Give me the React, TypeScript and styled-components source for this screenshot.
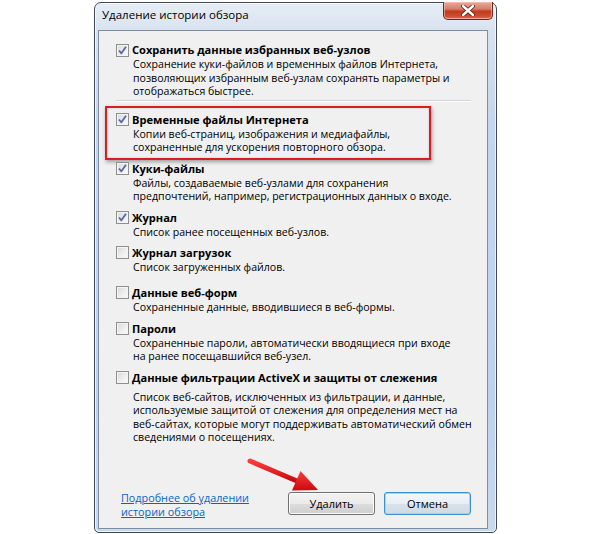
import React from 'react';
import styled, { createGlobalStyle } from 'styled-components';

const GlobalStyle = createGlobalStyle`
  html, body {
    margin: 0;
    padding: 0;
    background: #ffffff;
    overflow: hidden;
  }
  body {
    font-family: 'Open Sans', 'Noto Sans', 'DejaVu Sans', sans-serif;
    color: #000;
  }
`;

interface Option {
  title: string;
  lines: string[];
  checked: boolean;
  gap?: number;
  descGap?: number;
  highlighted?: boolean;
  separated?: boolean;
}

const options: Option[] = [
  {
    title: 'Сохранить данные избранных веб-узлов',
    lines: [
      'Сохранение куки-файлов и временных файлов Интернета,',
      'позволяющих избранным веб-узлам сохранять параметры и',
      'отображаться быстрее.',
    ],
    checked: true,
    gap: 0,
    separated: true,
  },
  {
    title: 'Временные файлы Интернета',
    lines: ['Копии веб-страниц, изображения и медиафайлы,', 'сохраненные для ускорения повторного обзора.'],
    checked: true,
    gap: 11,
    highlighted: true,
  },
  {
    title: 'Куки-файлы',
    lines: ['Файлы, создаваемые веб-узлами для сохранения', 'предпочтений, например, регистрационных данных о входе.'],
    checked: true,
  },
  { title: 'Журнал', lines: ['Список ранее посещенных веб-узлов.'], checked: true },
  { title: 'Журнал загрузок', lines: ['Список загруженных файлов.'], checked: false, gap: 6.5 },
  { title: 'Данные веб-форм', lines: ['Сохраненные данные, вводившиеся в веб-формы.'], checked: false, gap: 11.5 },
  {
    title: 'Пароли',
    lines: ['Сохраненные пароли, автоматически вводящиеся при входе', 'на ранее посещавшийся веб-узел.'],
    checked: false,
    gap: 7.5,
  },
  {
    title: 'Данные фильтрации ActiveX и защиты от слежения',
    lines: [
      'Список веб-сайтов, исключенных из фильтрации, и данные,',
      'используемые защитой от слежения для определения мест на',
      'веб-сайтах, которые могут поддерживать автоматический обмен',
      'сведениями о посещениях.',
    ],
    checked: false,
    descGap: 6,
  },
];

const CheckBox = ({ checked }: { checked: boolean }) => (
  <Box>
    {checked && (
      <svg width='11' height='11' viewBox='0 0 11 11'>
        <path d='M2 5.5 L4.4 8.3 L9 1.8' fill='none' stroke='#5467a8' strokeWidth='1.8' strokeLinejoin='round' />
      </svg>
    )}
  </Box>
);

const CloseIcon = () => (
  <svg width='14' height='11' viewBox='0 0 14 11'>
    <path d='M2 1 L12 10 M12 1 L2 10' stroke='#5a1a10' strokeWidth='4' strokeLinecap='round' />
    <path d='M2 1 L12 10 M12 1 L2 10' stroke='#ffffff' strokeWidth='2.4' strokeLinecap='round' />
  </svg>
);

const Arrow = () => (
  <ArrowLayer width='90' height='46' viewBox='0 0 90 46'>
    <defs>
      <linearGradient id='arrowRed' x1='0' y1='0' x2='0' y2='1'>
        <stop offset='0' stopColor='#ff3b3b' />
        <stop offset='1' stopColor='#c80a10' />
      </linearGradient>
    </defs>
    <path d='M10 9 L57 29' stroke='url(#arrowRed)' strokeWidth='5' strokeLinecap='round' />
    <path d='M78 38 L60.5 19 L52 38.5 Z' fill='url(#arrowRed)' />
  </ArrowLayer>
);

const App = () => {
  return (
    <>
      <GlobalStyle />
      <Page>
        <Window>
          <TitleBar>
            <Caption>Удаление истории обзора</Caption>
            <CloseButton>
              <CloseIcon />
            </CloseButton>
          </TitleBar>
          <Frame>
            <Panel>
              <List>
                {options.map((o) => (
                  <React.Fragment key={o.title}>
                    <Item $gap={o.gap ?? 7} $highlighted={!!o.highlighted}>
                      <TitleRow>
                        <CheckBox checked={o.checked} />
                        <ItemTitle>{o.title}</ItemTitle>
                      </TitleRow>
                      <Description $gap={o.descGap ?? 1}>
                        {o.lines.map((l) => (
                          <div key={l}>{l}</div>
                        ))}
                      </Description>
                    </Item>
                    {o.separated && <Separator />}
                  </React.Fragment>
                ))}
              </List>
              <Footer>
                <MoreLink href='#'>
                  Подробнее об удалении
                  <br />
                  истории обзора
                </MoreLink>
                <Buttons>
                  <Button>Удалить</Button>
                  <Button $default>Отмена</Button>
                </Buttons>
              </Footer>
            </Panel>
          </Frame>
          <Arrow />
        </Window>
      </Page>
    </>
  );
};

const Page = styled.div`
  width: 591px;
  height: 534px;
  padding: 2px 0 0 94px;
  box-sizing: border-box;
`;

const Window = styled.div`
  position: relative;
  width: 403px;
  height: 531px;
  box-sizing: border-box;
  display: flex;
  flex-direction: column;
  border: 1px solid #3e4856;
  border-radius: 7px 7px 5px 5px;
  background: linear-gradient(180deg, #e6edf5 0px, #d7e2ef 30px, #c3d6ee 120px, #bcd2ec 400px, #c8d9ee 100%);
  box-shadow: inset 0 0 0 1px rgba(255, 255, 255, 0.7);
`;

const TitleBar = styled.div`
  display: flex;
  align-items: flex-start;
  height: 27px;
  padding-left: 7px;
`;

const Caption = styled.div`
  flex: 1;
  padding-top: 4px;
  font-size: 11.5px;
  line-height: 16px;
  color: #000;
`;

const CloseButton = styled.div`
  display: flex;
  align-items: center;
  justify-content: center;
  width: 50px;
  height: 18px;
  margin: -1px 3px 0 0;
  box-sizing: border-box;
  border: 1px solid #6b2a20;
  border-top: none;
  border-radius: 0 0 5px 5px;
  background: linear-gradient(180deg, #eaa898 0%, #d9806a 40%, #c23a20 55%, #cc4f32 85%, #de8466 100%);
  box-shadow: inset 0 0 0 1px rgba(255, 210, 200, 0.5);
`;

const Frame = styled.div`
  flex: 1;
  display: flex;
  padding: 0 8px 3px 3px;
`;

const Panel = styled.div`
  flex: 1;
  min-width: 0;
  display: flex;
  flex-direction: column;
  background: #f0f0f0;
  border: 1px solid #7c8ea5;
  padding: 12px 16px 13px 17px;
`;

const List = styled.div`
  display: flex;
  flex-direction: column;
`;

const Item = styled.div<{ $gap: number; $highlighted: boolean }>`
  position: relative;
  margin-top: ${(p) => p.$gap}px;
  ${(p) =>
    p.$highlighted &&
    `
    &::after {
      content: '';
      position: absolute;
      top: -7px;
      left: -11px;
      width: 326px;
      height: 54px;
      box-sizing: border-box;
      border: 2.5px solid #dc1c22;
      box-shadow: 1px 2px 4px rgba(0, 0, 0, 0.35), inset 0 0 2px rgba(0, 0, 0, 0.2);
      pointer-events: none;
    }
  `}
`;

const TitleRow = styled.div`
  display: flex;
  align-items: center;
  gap: 3px;
  height: 14px;
`;

const Box = styled.div`
  flex: none;
  width: 13px;
  height: 13px;
  box-sizing: border-box;
  border: 1px solid #8e8f8f;
  background: linear-gradient(135deg, #d8d8d8 0%, #eeeeee 55%, #fbfbfb 100%);
  box-shadow: inset 0 0 0 1px #f4f4f4;
  display: flex;
  align-items: center;
  justify-content: center;
`;

const ItemTitle = styled.div`
  font-size: 11.1px;
  font-weight: 700;
  line-height: 14px;
  white-space: nowrap;
`;

const Description = styled.div<{ $gap: number }>`
  margin-top: ${(p) => p.$gap}px;
  padding-left: 17px;
  font-size: 10.6px;
  line-height: 13.5px;
  white-space: nowrap;
  color: #000;
`;

const Separator = styled.div`
  height: 1px;
  margin-top: 1px;
  width: 355px;
  background: #d0d4d8;
  border-bottom: 1px solid #ffffff;
`;

const Footer = styled.div`
  margin-top: auto;
  display: flex;
  align-items: flex-end;
  justify-content: space-between;
  padding-left: 5px;
`;

const MoreLink = styled.a`
  font-size: 10.8px;
  line-height: 14px;
  color: #0a64c8;
  text-decoration: underline;
  margin-bottom: -4px;
`;

const Buttons = styled.div`
  display: flex;
  gap: 9px;
`;

const Button = styled.button<{ $default?: boolean }>`
  width: 87px;
  height: 23px;
  padding: 0;
  font-family: inherit;
  font-size: 11px;
  color: #000;
  border-radius: 3px;
  border: 1px solid ${(p) => (p.$default ? '#3c8fd0' : '#707070')};
  background: ${(p) =>
    p.$default
      ? 'linear-gradient(180deg, #f4f8fb 0%, #e8eef4 50%, #d9e2ea 51%, #cfdae4 100%)'
      : 'linear-gradient(180deg, #f2f2f2 0%, #ebebeb 50%, #dddddd 51%, #cfcfcf 100%)'};
  box-shadow: inset 0 0 0 1px ${(p) => (p.$default ? '#9fd5f7' : '#fcfcfc')};
`;

const ArrowLayer = styled.svg`
  position: absolute;
  left: 145px;
  top: 449px;
  pointer-events: none;
`;

export default App;
